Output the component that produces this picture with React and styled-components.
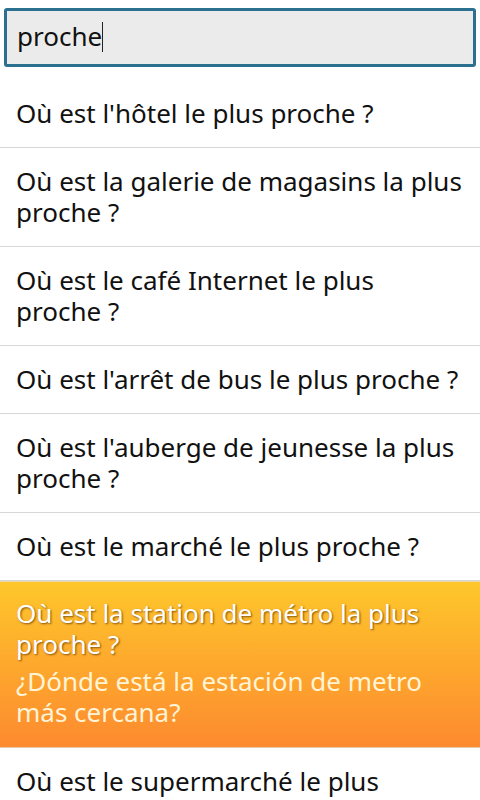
import React from 'react'
import styled, { createGlobalStyle } from 'styled-components'

const phrases = [
  { fr: "Où est l'hôtel le plus proche\u00a0?" },
  { fr: 'Où est la galerie de magasins la plus proche\u00a0?' },
  { fr: 'Où est le café Internet le plus proche\u00a0?' },
  { fr: "Où est l'arrêt de bus le plus proche\u00a0?" },
  { fr: "Où est l'auberge de jeunesse la plus proche\u00a0?" },
  { fr: 'Où est le marché le plus proche\u00a0?' },
  {
    fr: 'Où est la station de métro la plus proche\u00a0?',
    es: '¿Dónde está la estación de metro más cercana?',
    selected: true,
  },
  { fr: 'Où est le supermarché le plus proche\u00a0?' },
]

const App = () => (
  <Screen>
    <GlobalStyle />
    <SearchBar>
      <SearchField>
        <span>proche</span>
        <Caret />
      </SearchField>
    </SearchBar>
    <List>
      {phrases.map(item => (
        <Row key={item.fr} $selected={item.selected}>
          <Phrase $selected={item.selected}>{item.fr}</Phrase>
          {item.es && <Translation>{item.es}</Translation>}
        </Row>
      ))}
    </List>
  </Screen>
)

const GlobalStyle = createGlobalStyle`
  html, body {
    margin: 0;
    padding: 0;
    background: #ffffff;
  }
  body {
    font-family: "Noto Sans", "Open Sans", sans-serif;
  }
`

const Screen = styled.div`
  width: 480px;
  height: 800px;
  overflow: hidden;
  background: #ffffff;
`

const SearchBar = styled.div`
  padding: 8px 4px 13px 4px;
`

const SearchField = styled.div`
  display: flex;
  align-items: center;
  height: 53px;
  border: 3px solid #2c7090;
  border-radius: 3px;
  background: #ebebeb;
  padding: 0 10px;
  font-size: 26px;
  line-height: 30px;
  color: #111111;
  padding-bottom: 4px;
  box-sizing: border-box;
  height: 59px;
`

const Caret = styled.span`
  display: inline-block;
  width: 1px;
  height: 30px;
  background: #222222;
  margin-top: 2px;
`

const List = styled.div`
  display: flex;
  flex-direction: column;
`

const Row = styled.div`
  padding: 18px 18px 18px 16px;
  border-bottom: 1px solid #d8d8d8;
  ${props =>
    props.$selected &&
    `
    padding-top: 16px;
    padding-bottom: 19px;
    background: linear-gradient(to bottom, #fec72b, #fd8a2f);
    border-top: 1px solid #e8d8a8;
    border-bottom: 1px solid #e6c9a0;
  `}
`

const Phrase = styled.div`
  font-size: 26px;
  line-height: 31px;
  color: ${props => (props.$selected ? '#ffffff' : '#111111')};
  text-shadow: ${props => (props.$selected ? '1px 1px 2px rgba(90, 50, 0, 0.75)' : 'none')};
`

const Translation = styled.div`
  margin-top: 6px;
  font-size: 26px;
  line-height: 31px;
  color: #fff4d6;
`

export default App
